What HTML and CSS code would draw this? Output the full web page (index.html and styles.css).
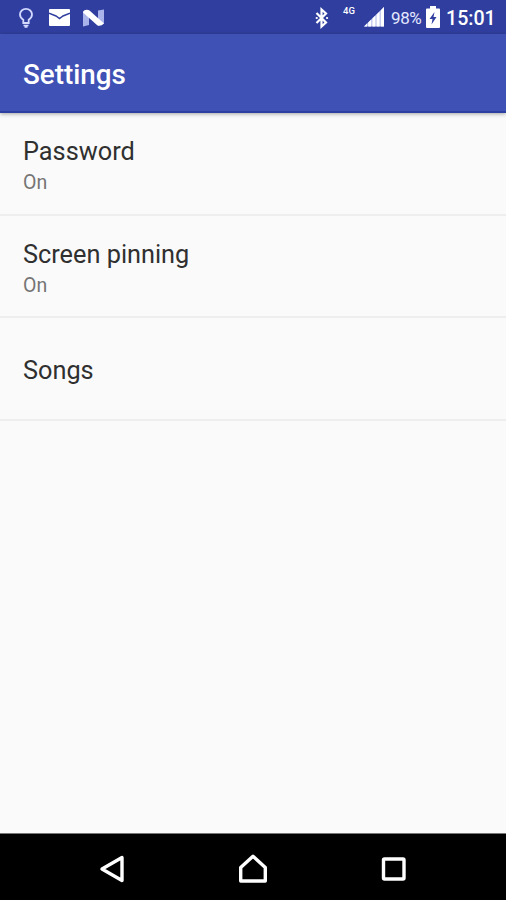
FILE: index.html
```html
<!DOCTYPE html>
<html lang="en">
<head>
<meta charset="utf-8">
<title>Settings</title>
<link rel="stylesheet" href="styles.css">
</head>
<body>
<div class="screen">
  <header class="status">
    <svg class="bulb" width="16" height="22" viewBox="0 0 16 22" fill="none" stroke="#d3d9ff" stroke-width="1.8"><path d="M5.300 16v-3.200C3.300 11.500 2 9.700 2 7.600a6 5.800 0 0 1 12 0c0 2.100-1.300 3.900-3.300 5.200V16z"/><path d="M5.500 18.500h5M6.500 20h3" stroke-width="1.500"/></svg>
    <svg class="mail" width="21" height="17" viewBox="0 0 21 17"><rect width="21" height="17" rx="1" fill="#fff"/><path d="M0 4.300l7 2.700 3.500 2.500L14 7l7-2.700" fill="none" stroke="#303f9f" stroke-width="1.500"/></svg>
    <svg class="nougat" width="22" height="18" viewBox="0 0 22 18"><path d="M0 2l6 2v12l-6 1.500zM15 1.500l6-1v14l-6 2z" fill="#aab3ea"/><path d="M1 1.500Q4 0 6.500 1.500L21 14.500Q18 17.500 14.500 16.500L0 3.500z" fill="#fff"/></svg>
    <span class="spacer"></span>
    <svg class="bluetooth" width="16" height="22" viewBox="0 0 16 22" fill="none" stroke="#fff" stroke-width="2.200"><path d="M2.500 6l9.500 9.500-4.500 4V2.500L12 6.500 2.500 16"/><path d="M2.700 11h.1M13 11h.1" stroke-linecap="round"/></svg>
    <span class="network">4G</span>
    <svg class="signal" width="20" height="20" viewBox="0 0 20 20" fill="#fff"><path d="M0 19.500L20 0v19.500z" fill="#b9c1ef"/><path d="M0 19.500l3-3v3zM4.200 15.500l3-3v7h-3zM8.400 11.500l3-3v11h-3zM12.600 7.400l3-3v15.100h-3zM16.800 3.200L20 0v19.500h-3.200z"/></svg>
    <span class="percent">98%</span>
    <svg class="battery" width="14" height="22" viewBox="0 0 14 22"><path d="M4 0h6v2.500h3q1 0 1 1V21q0 1-1 1H1q-1 0-1-1V3.500q0-1 1-1h3z" fill="#fff"/><path d="M8.500 6L3.500 13h3L5.500 18.500 10.500 11h-3z" fill="#303f9f"/></svg>
    <span class="clock">15:01</span>
  </header>
  <div class="appbar"><h1>Settings</h1></div>
  <main class="list">
    <section class="row"><div class="title">Password</div><div class="summary">On</div></section>
    <section class="row"><div class="title">Screen pinning</div><div class="summary">On</div></section>
    <section class="row single"><div class="title">Songs</div></section>
  </main>
  <nav class="nav">
    <svg width="30" height="32" viewBox="0 0 30 32"><path d="M25 4.500v23L5 16z"/></svg>
    <svg width="30" height="32" viewBox="0 0 30 32"><path d="M2.700 28V14.500L15 3.300l12.300 11.200V28z"/></svg>
    <svg width="30" height="32" viewBox="0 0 30 32"><rect x="4.500" y="6" width="20.500" height="20" rx="1"/></svg>
  </nav>
</div>
</body>
</html>
```
FILE: styles.css
```css
* { box-sizing: border-box; }
body { margin: 0; font-family: Roboto, "Liberation Sans", sans-serif; background: #fafafa; }
.screen { width: 506px; height: 900px; display: flex; flex-direction: column; overflow: hidden; }
svg { display: block; flex: none; }
.status { height: 34px; flex: none; display: flex; align-items: flex-start; padding: 6px 10px 0 18px; background: #303f9f; color: #fff; }
.bulb { margin-top: 1px; }
.mail { margin: 3px 0 0 15px; }
.nougat { margin: 3px 0 0 13px; }
.spacer { flex: 1; }
.bluetooth { margin: 1px 13px 0 0; }
.network { width: 20px; font-size: 9.5px; font-weight: 500; line-height: 10px; }
.signal { margin: 1px 0 0 1px; }
.percent { width: 35px; margin-left: 7px; font-size: 17px; line-height: 24px; letter-spacing: -.4px; color: #e4e8ff; }
.battery { margin: 0 6px 0 0; }
.clock { width: 50px; margin-top: 1px; font-size: 19.6px; font-weight: 500; line-height: 24px; white-space: nowrap; }
.appbar { height: 79px; flex: none; display: flex; align-items: center; padding-left: 23px; background: #3f51b5; border-bottom: 2px solid #2d409f; box-shadow: 0 1px 4px rgba(0, 0, 0, .35); color: #fff; z-index: 1; }
h1 { margin: 4px 0 0; font-size: 27.8px; font-weight: 500; line-height: 32px; }
.list { flex: 1; background: #fafafa; }
.row { height: 102.600px; padding: 24px 23px 0; border-bottom: 2px solid #eee; color: #303030; }
.title { font-size: 25.3px; line-height: 30px; }
.summary { margin-top: 4px; font-size: 19.5px; line-height: 24px; color: #757575; }
.single { padding-top: 38px; }
.nav { height: 67px; flex: none; display: flex; justify-content: center; gap: 111px; padding: 19px 0 0; background: #000; border-top: 1px solid #777; }
.nav svg { fill: none; stroke: #fff; stroke-width: 3.400; stroke-linejoin: round; }
```
